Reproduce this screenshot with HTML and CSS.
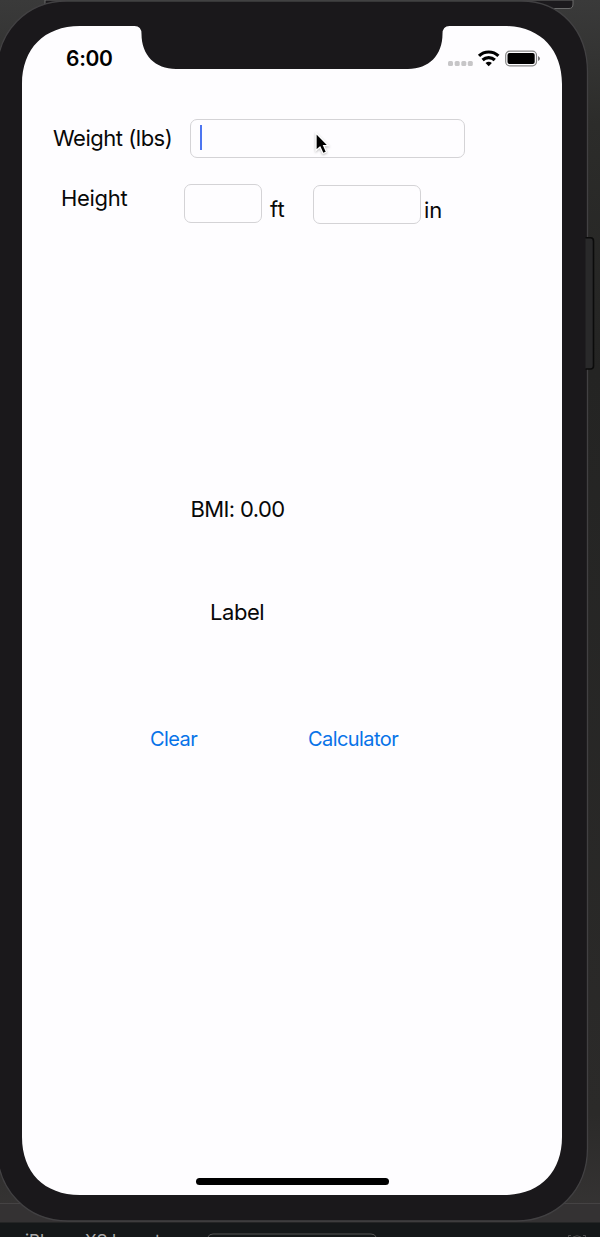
FILE: index.html
```html
<!DOCTYPE html>
<html lang="en">
<head>
<meta charset="utf-8">
<title>BMI Calculator</title>
<link rel="stylesheet" href="styles.css">
</head>
<body>
<div class="desktop">
  <svg class="shell" width="600" height="1237" viewBox="0 0 600 1237" aria-hidden="true">
    <defs>
      <linearGradient id="side" x1="0" y1="0" x2="0" y2="1">
        <stop offset="0" stop-color="#3a3a3a"/><stop offset=".1" stop-color="#2c2c2a"/><stop offset=".3" stop-color="#242423"/><stop offset=".9" stop-color="#2b2a29"/><stop offset="1" stop-color="#383636"/>
      </linearGradient>
    </defs>
    <rect width="600" height="1237" fill="url(#side)"/>
    <path d="M45 0V8.500H569Q573 8.500 573 4V0Z" fill="#1c1a1d" stroke="#6b6b6b"/>
    <path d="M0 1203.500H600" stroke="#454344"/>
    <rect y="1204" width="600" height="19" fill="#343233"/>
    <rect y="1222.500" width="600" height="15" fill="#151819"/>
    <path d="M208 1237Q209 1234 213 1234H371Q375 1234 376 1237" fill="none" stroke="#555"/>
    <path d="M571 1235.500H568.500V1237M583 1235.500H585.500V1237M573 1237Q577 1234.500 581 1237" fill="none" stroke="#4c4c4c"/>
    <path d="M67 1H521C562 1 587.500 32 587.500 72V1148C587.500 1190 557 1221 516 1221H68C27 1221 -3 1190 -3 1148V72C-3 32 26 1 67 1Z" fill="#1a181b" stroke="#424143" stroke-width="1.300"/>
    <path d="M585.500 237.800H590.500Q593.500 237.800 593.500 241V366Q593.500 369 590.500 369H585.500Z" fill="#29292a"/>
    <path d="M585.500 237.800H590.500Q593.500 237.800 593.500 241V366Q593.500 369 590.500 369H585.500" fill="none" stroke="#0b0b0b" stroke-width="1.600"/>
    <path d="M80 26H134.500Q141.500 26 141.500 34C141.500 55 155 69 176 69H408C429 69 442.500 55 442.500 34Q442.500 26 449.500 26H504C540 26 562 49 562 84V1137C562 1172 540 1195 504 1195H80C44 1195 22 1172 22 1137V84C22 49 44 26 80 26Z" fill="#fefdff"/>
  </svg>
  <main class="screen">
    <header class="status">
      <span class="time">6:00</span>
      <svg class="indicators" width="94" height="18" viewBox="0 0 94 18" aria-hidden="true">
        <g fill="#c7c6c8"><rect x="1" y="11" width="5" height="5" rx="1.500"/><rect x="7.700" y="11" width="5" height="5" rx="1.500"/><rect x="14.300" y="11" width="5" height="5" rx="1.500"/><rect x="20.800" y="11" width="5" height="5" rx="1.500"/></g>
        <g fill="none" stroke="#000" stroke-width="3.200"><path d="M32 5.900A14 14 0 0 1 51.400 5.900"/><path d="M35.600 10A9 9 0 0 1 47.800 10"/></g>
        <path d="M38.500 13Q41.700 10.700 44.900 13L41.700 16.200Z"/>
        <rect x="58.700" y="1.200" width="30.800" height="14.600" rx="4" fill="none" stroke="#858585" stroke-width="1.200"/>
        <rect x="60.500" y="3" width="27.200" height="11" rx="2"/>
        <path d="M91 6Q93 7 93 8.500Q93 10 91 11Z" fill="#777"/>
      </svg>
    </header>
    <form class="form">
      <div class="row weight-row">
        <label class="weight">Weight (lbs)</label>
        <div class="field weight-field"><span class="caret"></span>
          <svg class="pointer" width="17" height="25" viewBox="0 0 17 25" aria-hidden="true"><path d="M2 1V18.500L6 15L9 21.500L12.500 20L9.700 13.700H14.500Z" stroke="#fff" stroke-width="1.300"/></svg>
        </div>
      </div>
      <div class="row height-row">
        <label class="height">Height</label>
        <div class="field feet"></div><span class="ft">ft</span>
        <div class="field inches"></div><span class="in">in</span>
      </div>
    </form>
    <p class="result">BMI: 0.00</p>
    <p class="message">Label</p>
    <nav class="actions"><a class="clear">Clear</a><a class="calculate">Calculator</a></nav>
    <div class="home"></div>
  </main>
  <footer class="caption"><span>iPhone XS layout</span></footer>
</div>
</body>
</html>
```
FILE: styles.css
```css
* { box-sizing: border-box; }
body { margin: 0; font-family: Inter, "Liberation Sans", sans-serif; }
.desktop { position: relative; width: 600px; height: 1237px; overflow: hidden; padding: 26px 38px 0 22px; }
.shell { position: absolute; left: 0; top: 0; }
.screen { position: relative; width: 540px; height: 1169px; display: flex; flex-direction: column; color: #080808; font-size: 22px; line-height: 28px; }
.status { display: flex; justify-content: space-between; padding: 20px 21px 0 44px; height: 93px; }
.time { font-size: 21px; font-weight: 600; line-height: 26px; letter-spacing: -.3px; color: #000; }
.indicators { margin-top: 4px; }
.row { display: flex; align-items: flex-start; white-space: nowrap; }
.weight-row { height: 65px; padding-left: 31px; }
.weight { width: 137px; padding-top: 5px; letter-spacing: -.48px; }
.field { border: 1px solid #d4d3d6; border-radius: 7px; background: #fefdff; height: 39px; }
.weight-field { position: relative; width: 275px; padding: 5px 0 0 9px; }
.caret { display: block; width: 2px; height: 25px; background: #4d75f0; }
.pointer { position: absolute; left: 123px; top: 12px; filter: drop-shadow(0 1px 1px #0004); }
.height-row { height: 311px; padding-left: 39px; }
.height { width: 123px; letter-spacing: -.3px; }
.feet { width: 78px; }
.ft { width: 51px; padding: 11px 0 0 8px; }
.inches { width: 108px; margin-top: 1px; }
.in { padding: 12px 0 0 3px; }
.result { margin: 0 0 75px 168.5px; letter-spacing: -.62px; }
.message { margin: 0 0 99px 188px; letter-spacing: -.45px; }
.actions { display: flex; padding-left: 128px; font-size: 20px; color: #0873e8; }
.clear { width: 158px; letter-spacing: -.6px; }
.calculate { letter-spacing: -.57px; }
.home { margin: auto auto 10px 174px; width: 193px; height: 7px; border-radius: 4px; background: #000; }
.caption { position: relative; margin: 38px 0 0 3px; height: 4px; font-size: 17px; line-height: 16px; color: #aaa; white-space: nowrap; }
```
